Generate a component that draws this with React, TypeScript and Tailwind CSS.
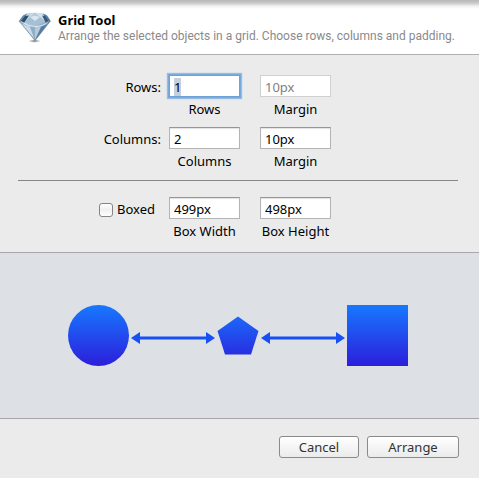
import { useEffect, useRef } from "react";
import type { ReactNode, RefObject } from "react";

function DiamondIcon() {
  return (
    <svg viewBox="0 0 34 32" className="h-8 w-[34px] shrink-0" aria-hidden="true">
      <defs>
        <linearGradient id="stone" x1="0" y1="0" x2="1" y2="1">
          <stop offset="0" stopColor="#cddce8" />
          <stop offset="0.5" stopColor="#9fbad0" />
          <stop offset="1" stopColor="#4d7396" />
        </linearGradient>
        <radialGradient id="ground">
          <stop offset="0" stopColor="#555" stopOpacity="0.8" />
          <stop offset="1" stopColor="#555" stopOpacity="0" />
        </radialGradient>
      </defs>
      <ellipse cx="16.500" cy="29" rx="6" ry="1.800" fill="url(#ground)" />
      <path d="M1 9Q4 3 9 1.500Q17 0 25 1.500Q30 3 32.500 9L17 28.500Z" fill="url(#stone)" />
      <path d="M1 9L5 3.500L9 1.500L8 6L5 12Z" fill="#6b8ba8" />
      <path d="M32.500 9L29 3.500L25 1.500L26 6L29 12Z" fill="#587b9b" />
      <path d="M9 1.500L17 0.800L12 5L7 9Z" fill="#c6d7e4" />
      <path d="M25 1.500L17 0.800L22 5L27 9Z" fill="#d3e0ea" />
      <path d="M7 4L11 3.500L6 11L3 9Z" fill="#2c506f" />
      <path d="M24 3.500L27.500 4.500L31 10L28 11Z" fill="#34587a" />
      <path d="M12 5L17 3.500L22 5L27 10L17 14L7 10Z" fill="#a5bfd4" />
      <path d="M12 5L17 9L22 5L17 3.500Z" fill="#dbe7ef" />
      <path d="M5 13L12 15L16.500 27Z" fill="#cbdbe7" />
      <path d="M12 15L17 14L17 27Z" fill="#8fadc6" />
      <path d="M17 14L23 15L17 27.500Z" fill="#b4cadb" />
      <path d="M23 15L29.500 12L17.500 28Z" fill="#557c9f" />
      <path d="M3 9.500Q10 14.500 17 14.500Q25 14.500 30.500 9.500" fill="none" stroke="#eef4f8" strokeWidth="0.8" />
      <path d="M1 9L17 28.500L32.500 9" fill="none" stroke="#5f7e9a" strokeWidth="0.6" />
    </svg>
  );
}

function Arrow({ x }: { x: number }) {
  return (
    <g fill="#1650f5">
      <path d={`M${x} 33l9-6v12z`} />
      <path d={`M${x + 84} 33l-9-6v12z`} />
      <rect x={x + 8} y="31.500" width="68" height="3" />
    </g>
  );
}

function Preview() {
  return (
    <svg viewBox="0 0 343 62" className="h-[62px] w-[343px]" role="img" aria-label="Grid preview">
      <defs>
        <linearGradient id="fill" gradientUnits="userSpaceOnUse" x1="0" y1="0" x2="0" y2="61">
          <stop offset="0" stopColor="#1778ff" />
          <stop offset="1" stopColor="#2c1edb" />
        </linearGradient>
      </defs>
      <circle cx="30.500" cy="30.500" r="30.500" fill="url(#fill)" />
      <Arrow x={63} />
      <path d="M170 11.500L190.500 26L183 49.500H157L149.500 26Z" fill="url(#fill)" />
      <Arrow x={193} />
      <rect x="279" y="0" width="61" height="61" fill="url(#fill)" />
    </svg>
  );
}

type FieldProps = {
  id: string;
  caption: string;
  value: string;
  disabled?: boolean;
  focused?: boolean;
  inputRef?: RefObject<HTMLInputElement | null>;
};

function Field({ id, caption, value, disabled, focused, inputRef }: FieldProps) {
  const look = focused
    ? "border-[#6fa3d8] shadow-[0_0_0_1px_#78a9dc,0_0_1px_2px_#97bde4]"
    : disabled
      ? "border-[#d0d0d0] text-[#808080]"
      : "border-[#b4b4b4] border-t-[#969696] shadow-[inset_0_1px_1px_#e2e2e2]";
  return (
    <div className="flex w-[71px] flex-col items-center gap-[3px]">
      <input
        id={id}
        ref={inputRef}
        defaultValue={value}
        disabled={disabled}
        className={`h-[22px] w-full border bg-white px-1 pt-px text-[13px] leading-4 outline-none selection:bg-[#c5cfdd] selection:text-black ${look}`}
      />
      <label htmlFor={id} className="whitespace-nowrap leading-[18px]">
        {caption}
      </label>
    </div>
  );
}

function Row({ lead, children }: { lead: ReactNode; children: ReactNode }) {
  return (
    <div className="grid grid-cols-[143fr_162px_119fr] gap-x-2">
      <div className="flex h-[26px] items-center justify-end">{lead}</div>
      <div className="flex gap-5">{children}</div>
    </div>
  );
}

export default function App() {
  const rows = useRef<HTMLInputElement>(null);

  useEffect(() => {
    rows.current?.focus();
    rows.current?.select();
  }, []);

  return (
    <form
      className="flex min-h-screen flex-col bg-[#ebebeb] font-['Lucida_Grande','Noto_Sans',sans-serif] text-[13px] text-black"
      onSubmit={(e) => e.preventDefault()}
    >
      <header className="border-b border-[#b0b0b0] bg-white bg-[linear-gradient(#b8b8b8,#c8c8c8_3px,#f0f0f0_6px,#fff_9px)] pb-[10px] pt-3">
        <div className="flex gap-[6px] pl-[18px]">
          <DiamondIcon />
          <div>
            <h1 className="text-[13px] font-bold leading-4">Grid Tool</h1>
            <p className="whitespace-nowrap font-['Lucida_Grande','Roboto',sans-serif] text-[12px] leading-4 text-[#8a8a8a]">
              Arrange the selected objects in a grid. Choose rows, columns and padding.
            </p>
          </div>
        </div>
      </header>

      <section className="px-[18px] pb-3 pt-5 pr-[21px]">
        <div className="flex flex-col gap-[9px] pb-[10px]">
          <Row lead={<label htmlFor="rows">Rows:</label>}>
            <Field id="rows" caption="Rows" value="1" focused inputRef={rows} />
            <Field id="row-margin" caption="Margin" value="10px" disabled />
          </Row>
          <Row lead={<label htmlFor="columns">Columns:</label>}>
            <Field id="columns" caption="Columns" value="2" />
            <Field id="column-margin" caption="Margin" value="10px" />
          </Row>
        </div>
        <hr className="mb-4 border-[#868686]" />
        <Row
          lead={
            <label className="mr-[6px] flex items-center gap-1">
              <input
                type="checkbox"
                className="size-[14px] appearance-none rounded-[3px] border border-[#858585] bg-linear-to-b from-white via-[#f0f0f0] to-white"
              />
              Boxed
            </label>
          }
        >
          <Field id="box-width" caption="Box Width" value="499px" />
          <Field id="box-height" caption="Box Height" value="498px" />
        </Row>
      </section>

      <section className="flex justify-center border-y border-[#a8a8a8] bg-[#dde0e5] pb-[51px] pt-[52px]">
        <Preview />
      </section>

      <footer className="flex justify-end gap-2 px-5 py-[17px]">
        <button
          type="button"
          className="h-[22px] w-20 rounded-[3px] border border-[#8a8a8a] bg-linear-to-b from-white to-[#ebebeb] leading-5 text-[#333]"
        >
          Cancel
        </button>
        <button
          type="submit"
          className="h-[22px] w-[92px] rounded-[3px] border border-[#8a8a8a] bg-linear-to-b from-white to-[#ebebeb] leading-5 text-[#333]"
        >
          Arrange
        </button>
      </footer>
    </form>
  );
}
